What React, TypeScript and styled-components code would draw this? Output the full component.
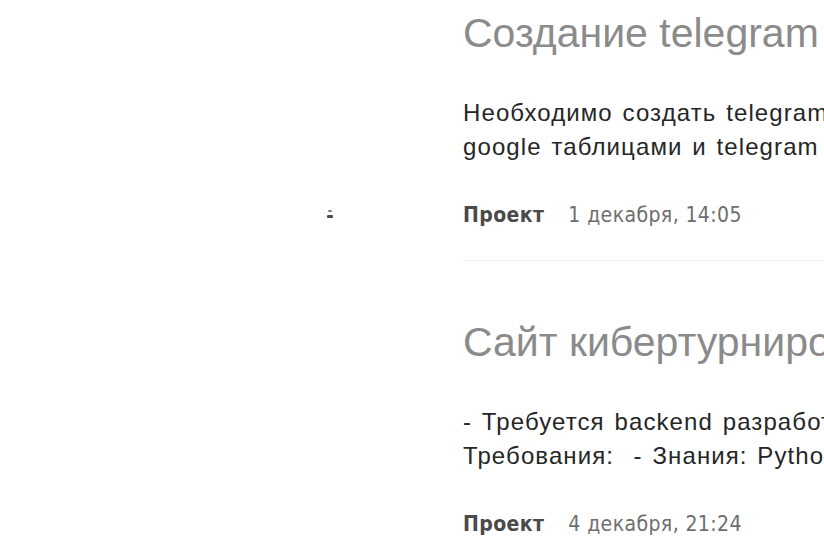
import styled, { createGlobalStyle } from "styled-components";

const GlobalStyle = createGlobalStyle`
    html, body {
        margin: 0;
        padding: 0;
        background: #fff;
    }
    body {
        font-family: "Liberation Sans", Arial, sans-serif;
        overflow: hidden;
    }
`;

const Page = styled.div`
    display: flex;
    width: 824px;
    height: 536px;
    overflow: hidden;
    background: #fff;
`;

const Sidebar = styled.aside`
    flex: 0 0 463px;
    display: flex;
    flex-direction: column;
    align-items: flex-start;
    padding: 210px 0 0 327px;
    box-sizing: border-box;
`;

const Handle = styled.div`
    display: flex;
    flex-direction: column;
    align-items: center;
    gap: 3px;
    width: 6px;
    span {
        display: block;
        background: #4d4d4d;
        border-radius: 1px;
    }
    .top {
        width: 4px;
        height: 2px;
        opacity: 0.7;
    }
    .bottom {
        width: 6px;
        height: 3px;
    }
`;

const Feed = styled.main`
    flex: 1;
    min-width: 0;
    overflow: hidden;
`;

const Card = styled.article`
    padding-top: 9px;
    h2 {
        margin: 0;
        font-size: 41px;
        line-height: 49px;
        font-weight: 400;
        color: #8b8b8b;
        white-space: nowrap;
    }
    p {
        margin: 38px 0 0;
        font-size: 24px;
        line-height: 34px;
        letter-spacing: 1.1px;
        word-spacing: 2px;
        color: #262626;
        white-space: pre;
    }
`;

const Meta = styled.div`
    margin-top: 39px;
    display: flex;
    align-items: baseline;
    gap: 24px;
    font-family: "DejaVu Sans Condensed", "DejaVu Sans", sans-serif;
    font-size: 21px;
    line-height: 24px;
    letter-spacing: 0.4px;
    .type {
        font-weight: 700;
        color: #4a4a4a;
    }
    .date {
        color: #6e6e6e;
    }
`;

const Divider = styled.hr`
    margin: 33px 0 48px;
    border: 0;
    border-top: 1px solid #efefef;
    height: 0;
`;

type Order = {
    title: string;
    lines: string[];
    type: string;
    date: string;
};

const orders: Order[] = [
    {
        title: "Создание telegram бота",
        lines: [
            "Необходимо создать telegram бота для работы с",
            "google таблицами и telegram каналом",
        ],
        type: "Проект",
        date: "1 декабря, 14:05",
    },
    {
        title: "Сайт кибертурниров",
        lines: [
            "- Требуется backend разработчик для сайта",
            "Требования:  - Знания: Python, Django",
        ],
        type: "Проект",
        date: "4 декабря, 21:24",
    },
];

const App = () => {
    return (
        <Page>
            <GlobalStyle />
            <Sidebar>
                <Handle>
                    <span className="top" />
                    <span className="bottom" />
                </Handle>
            </Sidebar>
            <Feed>
                {orders.map((order, index) => (
                    <Card key={index}>
                        <h2>{order.title}</h2>
                        <p>
                            {order.lines.map((line, i) => (
                                <span key={i}>
                                    {line}
                                    {i < order.lines.length - 1 && <br />}
                                </span>
                            ))}
                        </p>
                        <Meta>
                            <span className="type">{order.type}</span>
                            <span className="date">{order.date}</span>
                        </Meta>
                        <Divider />
                    </Card>
                ))}
            </Feed>
        </Page>
    );
};

export default App;
